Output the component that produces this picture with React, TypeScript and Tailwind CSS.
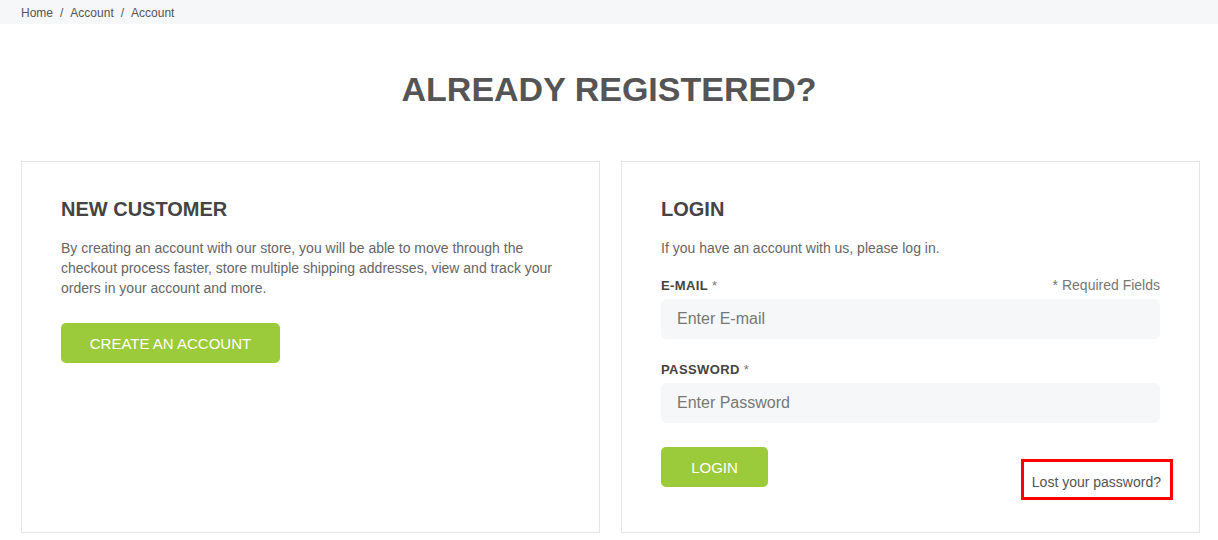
const FONT = { fontFamily: '"Liberation Sans", Arial, sans-serif' };

function Breadcrumb() {
  const items = ['Home', 'Account', 'Account'];
  return (
    <div className="flex h-[24px] items-center bg-[#f6f7f9] px-[21px] pt-px text-[12px] text-[#555]">
      {items.map((item, i) => (
        <span key={i} className="flex items-center">
          {i > 0 && <span className="mx-[7px]">/</span>}
          <span>{item}</span>
        </span>
      ))}
    </div>
  );
}

function Field({ label, placeholder, type, aside }: { label: string; placeholder: string; type: string; aside?: string }) {
  return (
    <div className="flex flex-col">
      <div className="flex h-[18px] items-center justify-between">
        <label className="pt-[2px] text-[13px] font-bold tracking-[0.4px] text-[#444]">
          {label} <span className="font-normal text-[#777]">*</span>
        </label>
        {aside && <span className="text-[14px] text-[#777]">{aside}</span>}
      </div>
      <input
        type={type}
        placeholder={placeholder}
        className="mt-[5px] h-[40px] w-full rounded-[6px] bg-[#f6f7f9] px-4 text-[16px] text-[#555] outline-none placeholder:text-[#777]"
      />
    </div>
  );
}

export default function App() {
  return (
    <div className="min-h-[540px] bg-white" style={FONT}>
      <Breadcrumb />

      <h1 className="mt-[43px] text-center text-[34px] font-bold leading-[44px] text-[#555]">
        ALREADY REGISTERED?
      </h1>

      <div className="ml-[21px] mt-[50px] grid w-[1179px] grid-cols-2 gap-[21px]">
        <div className="border border-[#e5e5e5] px-[39px] pb-8 pt-[35px]">
          <h2 className="text-[20px] font-bold leading-[24px] text-[#444]">NEW CUSTOMER</h2>
          <p className="mt-[17px] text-[14px] leading-[20px] text-[#666]">
            By creating an account with our store, you will be able to move through the checkout process faster,
            store multiple shipping addresses, view and track your orders in your account and more.
          </p>
          <button
            type="button"
            className="mt-[25px] h-[40px] w-[219px] rounded-[5px] bg-[#9bca3a] pt-[2px] text-[15px] text-white"
          >
            CREATE AN ACCOUNT
          </button>
        </div>

        <div className="border border-[#e5e5e5] px-[39px] pb-8 pt-[35px]">
          <h2 className="text-[20px] font-bold leading-[24px] text-[#444]">LOGIN</h2>
          <p className="mt-[17px] text-[14px] leading-[20px] text-[#666]">
            If you have an account with us, please log in.
          </p>
          <div className="mt-[18px] flex flex-col gap-[21px]">
            <Field label="E-MAIL" placeholder="Enter E-mail" type="email" aside="* Required Fields" />
            <Field label="PASSWORD" placeholder="Enter Password" type="password" />
          </div>
          <div className="mt-[24px] flex items-start justify-between">
            <button type="button" className="h-[40px] w-[107px] rounded-[5px] bg-[#9bca3a] pt-[2px] text-[15px] text-white">
              LOGIN
            </button>
            <a
              href="#"
              className="-mr-[13px] mt-[12px] flex h-[41px] items-center border-[3px] border-[#ff0000] pl-[8px] pr-[9px] pt-[6px] text-[14px] text-[#555]"
            >
              Lost your password?
            </a>
          </div>
        </div>
      </div>
    </div>
  );
}
